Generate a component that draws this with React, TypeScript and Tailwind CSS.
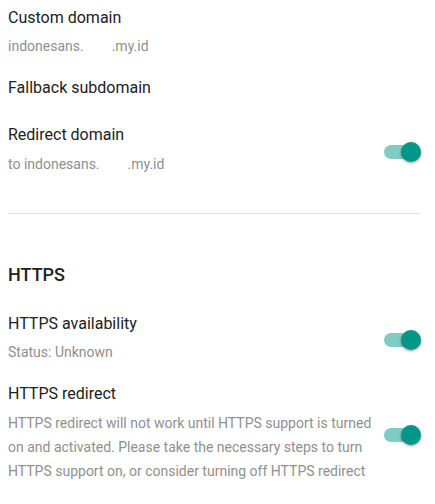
import React from "react";

const TITLE = "text-[16px] leading-[24px] text-[#212121]";
const SUB = "text-[14px] leading-[24px] text-[#8f8f8f]";

function Toggle() {
  return (
    <div className="relative w-[37px] h-[20px] shrink-0 mt-[4px]">
      <div className="absolute left-0 top-[3px] w-[30px] h-[14px] rounded-full bg-[#80cbc4]" />
      <div className="absolute right-0 top-0 w-[20px] h-[20px] rounded-full bg-[#009688] shadow-[0_1px_3px_rgba(0,0,0,0.4)]" />
    </div>
  );
}

export default function App() {
  return (
    <div
      className="w-[435px] h-[504px] bg-white pl-[8px] pr-[14px] overflow-hidden"
      style={{ fontFamily: "Roboto, 'Liberation Sans', sans-serif" }}
    >
      <div className="pt-[6px]">
        <div className={TITLE}>Custom domain</div>
        <div className={`${SUB} mt-[4px]`}>
          indonesans.<span className="inline-block w-[28px]" />.my.id
        </div>
        <div className={`${TITLE} mt-[18px]`}>Fallback subdomain</div>
        <div className="flex items-center justify-between mt-[23px]">
          <div>
            <div className={TITLE}>Redirect domain</div>
            <div className={`${SUB} mt-[5px]`}>
              to indonesans.<span className="inline-block w-[28px]" />.my.id
            </div>
          </div>
          <Toggle />
        </div>
      </div>

      <div className="mt-[37px] h-px bg-[#e0e0e0]" />

      <div className="mt-[49px] text-[18px] leading-[24px] font-medium text-[#212121]">
        HTTPS
      </div>

      <div className="flex items-center justify-between mt-[25px]">
        <div>
          <div className={TITLE}>HTTPS availability</div>
          <div className={`${SUB} mt-[4px]`}>Status: Unknown</div>
        </div>
        <Toggle />
      </div>

      <div className="flex items-center justify-between mt-[18px]">
        <div className="w-[366px]">
          <div className={TITLE}>HTTPS redirect</div>
          <div className={`${SUB} mt-[5px]`}>
            HTTPS redirect will not work until HTTPS support is turned on and
            activated. Please take the necessary steps to turn HTTPS support
            on, or consider turning off HTTPS redirect
          </div>
        </div>
        <Toggle />
      </div>
    </div>
  );
}
